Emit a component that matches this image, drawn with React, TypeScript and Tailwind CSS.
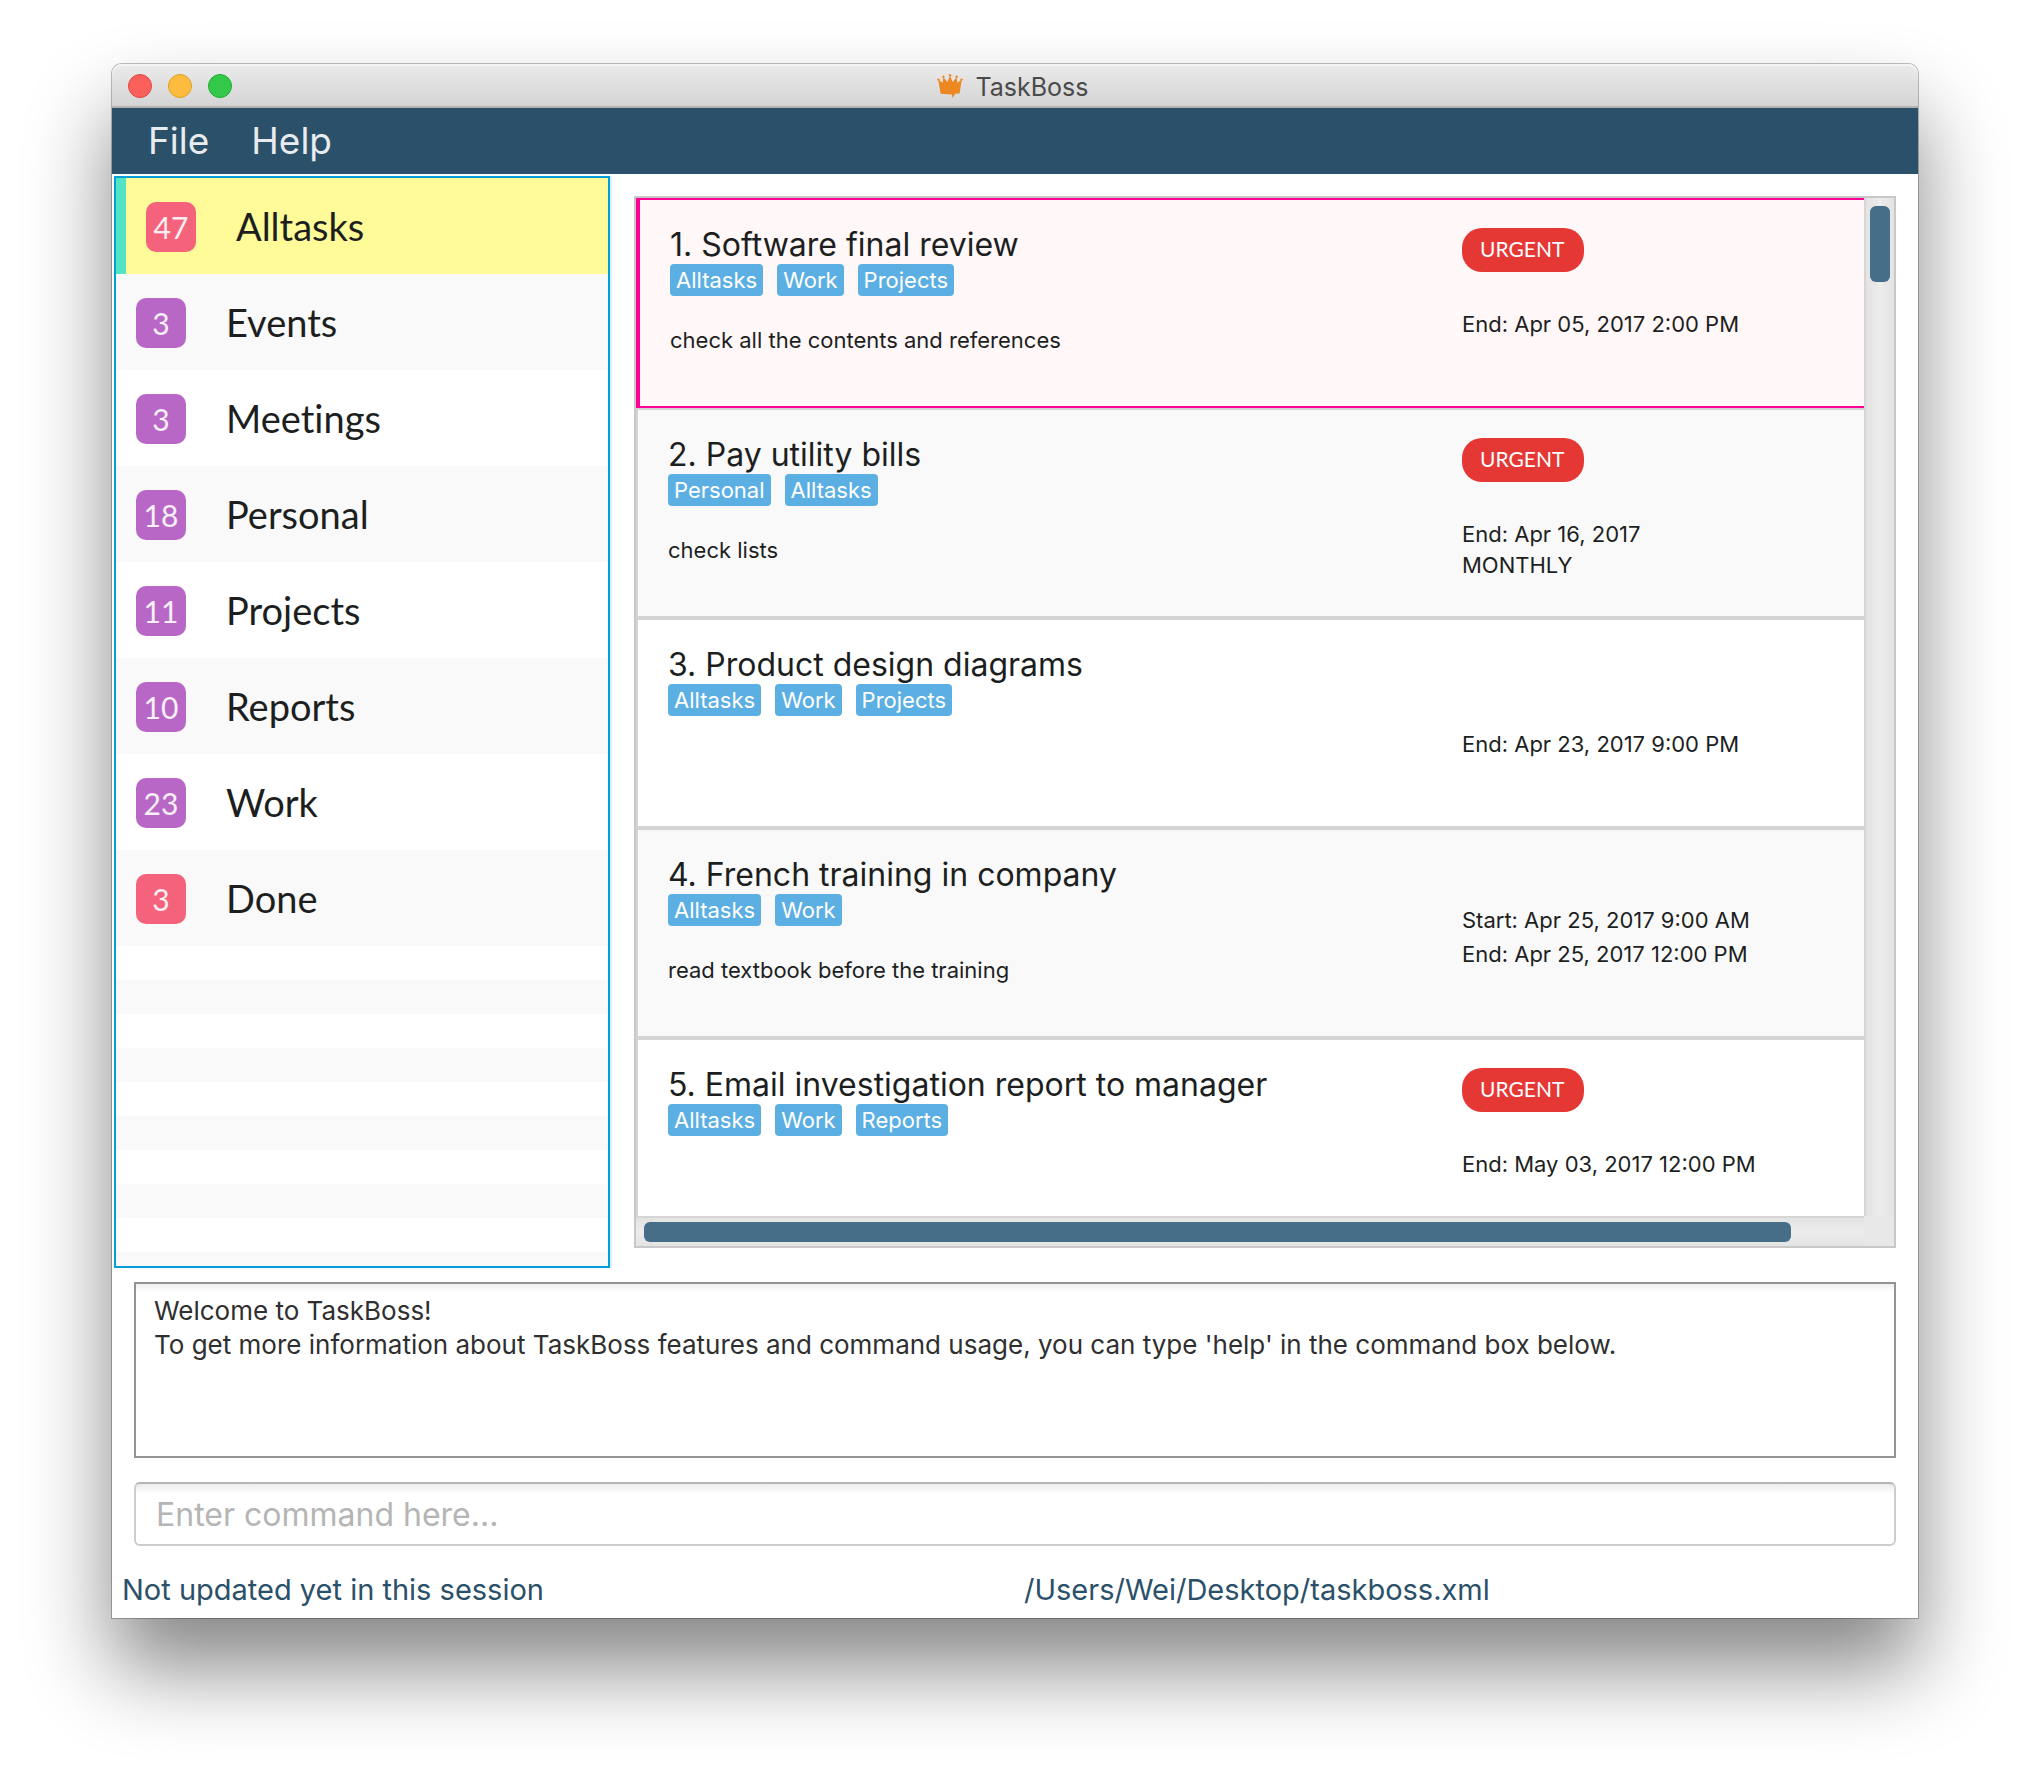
import React from "react";

type Category = { name: string; count: number; tone: "red" | "purple" };

const categories: Category[] = [
  { name: "Alltasks", count: 47, tone: "red" },
  { name: "Events", count: 3, tone: "purple" },
  { name: "Meetings", count: 3, tone: "purple" },
  { name: "Personal", count: 18, tone: "purple" },
  { name: "Projects", count: 11, tone: "purple" },
  { name: "Reports", count: 10, tone: "purple" },
  { name: "Work", count: 23, tone: "purple" },
  { name: "Done", count: 3, tone: "red" },
];

type Task = {
  title: string;
  tags: string[];
  note?: string;
  urgent?: boolean;
  start?: string;
  end: string;
  repeat?: string;
};

const tasks: Task[] = [
  {
    title: "Software final review",
    tags: ["Alltasks", "Work", "Projects"],
    note: "check all the contents and references",
    urgent: true,
    end: "Apr 05, 2017 2:00 PM",
  },
  {
    title: "Pay utility bills",
    tags: ["Personal", "Alltasks"],
    note: "check lists",
    urgent: true,
    end: "Apr 16, 2017",
    repeat: "MONTHLY",
  },
  {
    title: "Product design diagrams",
    tags: ["Alltasks", "Work", "Projects"],
    end: "Apr 23, 2017 9:00 PM",
  },
  {
    title: "French training in company",
    tags: ["Alltasks", "Work"],
    note: "read textbook before the training",
    start: "Apr 25, 2017 9:00 AM",
    end: "Apr 25, 2017 12:00 PM",
  },
  {
    title: "Email investigation report to manager",
    tags: ["Alltasks", "Work", "Reports"],
    urgent: true,
    end: "May 03, 2017 12:00 PM",
  },
];

function CrownIcon() {
  return (
    <svg viewBox="0 0 26 24" className="h-6 w-[26px]" fill="#ec8722" aria-hidden="true">
      <path d="M1.2 5.6 L5.6 8.8 L6.4 3.2 L10.4 8 L13 1.6 L15.6 8 L19.6 3.2 L20.4 8.8 L24.8 5.6 L22.6 19.6 H18.4 L15.4 24 L15 20.4 L3.6 19.8 Z" />
      <circle cx="1.4" cy="5.6" r="1.2" />
      <circle cx="6.4" cy="2.8" r="1.2" />
      <circle cx="13" cy="1.3" r="1.2" />
      <circle cx="19.6" cy="2.8" r="1.2" />
      <circle cx="24.6" cy="5.6" r="1.2" />
    </svg>
  );
}

function TitleBar() {
  return (
    <header className="grid h-11 grid-cols-[1fr_auto_1fr] items-center rounded-t-[10px] bg-linear-to-b from-[#ebebeb] to-[#d3d3d3] pr-5 pl-4 shadow-[inset_0_2px_0_#f5f5f5,inset_0_-2px_0_#b4b4b4]">
      <div className="flex gap-4">
        <button aria-label="Close" className="size-6 rounded-full border border-[#e2463f] bg-[#fc605b]" />
        <button aria-label="Minimize" className="size-6 rounded-full border border-[#dfa023] bg-[#fdbc40]" />
        <button aria-label="Zoom" className="size-6 rounded-full border border-[#1dad2b] bg-[#34c84a]" />
      </div>
      <div className="flex items-center gap-3">
        <CrownIcon />
        <h1 className="pt-0.5 text-[25px] leading-8 text-[#4a4a4a]">TaskBoss</h1>
      </div>
    </header>
  );
}

function CategoryRow({ category, selected }: { category: Category; selected: boolean }) {
  return (
    <li className={selected ? "bg-[#fffb98]" : "odd:bg-white even:bg-[#f9f9f9]"}>
      <button
        className={
          selected
            ? "flex h-24 w-full items-center gap-10 border-l-10 border-[#53e5c3] pl-5 text-left"
            : "flex h-24 w-full items-center gap-10 pl-5 text-left"
        }
      >
        <span
          className={
            category.tone === "red"
              ? "mt-0.5 flex size-[50px] shrink-0 items-center justify-center rounded-[10px] bg-[#f4627b] font-[Lato] text-[30px] text-white/90"
              : "mt-0.5 flex size-[50px] shrink-0 items-center justify-center rounded-[10px] bg-[#b967c7] font-[Lato] text-[30px] text-white/90"
          }
        >
          {category.count}
        </span>
        <span className="font-[Lato] text-[38px] leading-12 text-[#1d1f1f] [font-variant-ligatures:none]">
          {category.name}
        </span>
      </button>
    </li>
  );
}

function Sidebar() {
  return (
    <nav
      aria-label="Categories"
      className="flex w-[496px] shrink-0 flex-col border-2 border-[#049fd9] shadow-[2px_0_0_#d9f1fa]"
    >
      <ul>
        {categories.map((c, i) => (
          <CategoryRow key={c.name} category={c} selected={i === 0} />
        ))}
      </ul>
      <div className="flex-1 bg-[repeating-linear-gradient(to_bottom,#ffffff_0px,#ffffff_34px,#f9f9f9_34px,#f9f9f9_68px)]" />
    </nav>
  );
}

function TaskCard({ task, index, selected }: { task: Task; index: number; selected: boolean }) {
  return (
    <li
      className={
        selected
          ? "flex h-[210px] border-y-2 border-l-4 border-[#ff0099] bg-[#fff7f8] pl-[30px]"
          : "flex h-[210px] border-y-2 border-l-2 border-[#d4d4d4] pl-[30px] odd:bg-white even:bg-[#f9f9f9]"
      }
    >
      <div className="flex-1 pt-[26px]">
        <h2 className="text-[32px] leading-[38px] text-[#1d1f1f]">
          {index + 1}. {task.title}
        </h2>
        <div className="flex gap-3.5">
          {task.tags.map((t) => (
            <span key={t} className="rounded bg-[#5cafe2] px-1.5 text-[22px] leading-8 text-white">
              {t}
            </span>
          ))}
        </div>
        <p className="pt-7 text-[22px] leading-8 text-[#1d1f1f]">{task.note}</p>
      </div>
      <div className="flex w-[402px] flex-col pt-7 text-[22px] text-[#1d1f1f]">
        <div className="h-[45px]">
          {task.urgent && (
            <span className="inline-block rounded-[20px] bg-[#e53734] pr-5 pb-0.5 pl-[18px] font-[Lato] text-[21px] leading-[42px] text-white">
              URGENT
            </span>
          )}
        </div>
        <p className="h-[34px] leading-[34px]">{task.start && `Start: ${task.start}`}</p>
        <p className="leading-[34px]">End: {task.end}</p>
        <p className="leading-7">{task.repeat}</p>
      </div>
    </li>
  );
}

function TaskPanel() {
  return (
    <section
      aria-label="Tasks"
      className="grid min-w-0 flex-1 grid-cols-[1fr_30px] grid-rows-[1018px_30px] border-2 border-[#c8c8c8]"
    >
      <ol className="overflow-hidden">
        {tasks.map((t, i) => (
          <TaskCard key={t.title} task={t} index={i} selected={i === 0} />
        ))}
      </ol>
      <div className="border-l-2 border-[#d6d6d6] bg-linear-to-r from-[#e3e3e3] via-[#ececec] to-[#e3e3e3] px-1 pt-2">
        <div className="h-[76px] w-5 rounded-md bg-[#476e89]" />
      </div>
      <div className="border-t-2 border-[#d6d6d6] bg-linear-to-b from-[#e3e3e3] via-[#ececec] to-[#e3e3e3] pt-1 pl-2">
        <div className="h-5 w-[94%] rounded-md bg-[#476e89]" />
      </div>
      <div className="bg-[#e8e8e8]" />
    </section>
  );
}

export default function App() {
  return (
    <div className="min-h-screen bg-white px-28 pt-16 pb-40 font-[Inter,sans-serif]">
      <div className="rounded-t-[10px] bg-white shadow-[0_0_0_1px_rgba(0,0,0,0.25),0_50px_84px_rgba(0,0,0,0.48)]">
        <TitleBar />
        <div role="menubar" className="flex h-[66px] items-center gap-[42px] bg-[#2b5069] pl-9 text-[37px] text-[#e8ecef]">
          <button role="menuitem">File</button>
          <button role="menuitem">Help</button>
        </div>
        <main className="flex pt-0.5 pl-0.5">
          <Sidebar />
          <div className="flex min-w-0 flex-1 pt-5 pr-[22px] pb-5 pl-6">
            <TaskPanel />
          </div>
        </main>
        <div className="px-[22px] pt-3.5">
          <div
            role="status"
            className="h-44 border-2 border-[#939393] bg-linear-to-b from-[#efefef] to-white bg-[length:100%_8px] bg-no-repeat px-[18px] pt-2.5 text-[26px] leading-[34px] text-[#2f2f2f]"
          >
            <p>Welcome to TaskBoss!</p>
            <p>To get more information about TaskBoss features and command usage, you can type 'help' in the command box below.</p>
          </div>
          <input
            aria-label="Command"
            placeholder="Enter command here..."
            className="mt-6 block h-16 w-full rounded-md border-2 border-[#cdcdcd] border-t-[#b5b5b5] bg-linear-to-b from-[#ececec] to-white bg-[length:100%_10px] bg-no-repeat px-5 text-[32px] text-[#2f2f2f] outline-none placeholder:text-[#b5b5b5]"
          />
        </div>
        <footer className="grid h-[72px] grid-cols-2 pt-6 text-[29px] leading-10 text-[#2b5069]">
          <span className="pl-2.5">Not updated yet in this session</span>
          <span className="pl-[9px]">/Users/Wei/Desktop/taskboss.xml</span>
        </footer>
      </div>
    </div>
  );
}
